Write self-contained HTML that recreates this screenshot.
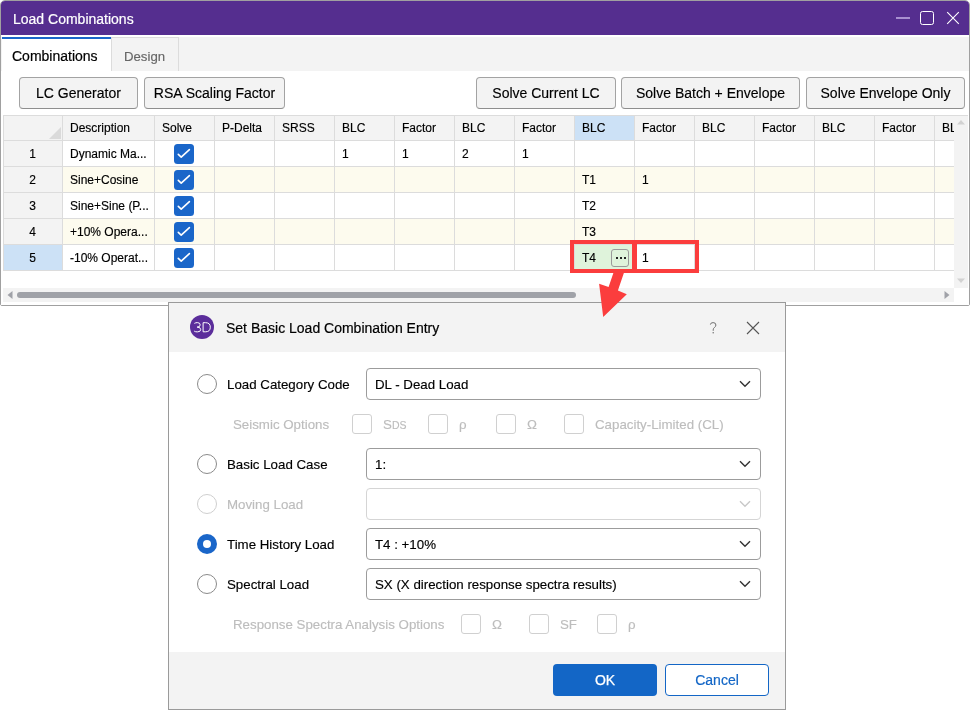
<!DOCTYPE html>
<html><head><meta charset="utf-8"><style>
html,body{margin:0;padding:0;}
body{width:970px;height:710px;position:relative;overflow:hidden;background:#fff;font-family:"Liberation Sans", sans-serif;}
body>div{position:absolute;}
.t{white-space:nowrap;-webkit-font-smoothing:antialiased;-webkit-text-stroke:0.15px currentColor;}
body{will-change:transform;}
</style></head><body>
<div style="left:0px;top:0px;width:970px;height:306px;background:#fff;border:1px solid #a0a0a0;box-sizing:border-box;border-radius:5px 5px 2px 2px;"></div>
<div style="left:1px;top:1px;width:968px;height:34px;background:#552e8f;border-radius:4px 4px 0 0;"></div>
<div class="t" style="left:13px;top:12.15px;font-size:14px;line-height:14px;color:#fff;-webkit-text-stroke:0.2px #fff;">Load Combinations</div>
<div style="left:896px;top:17px;width:14px;height:2px;background:#a88fd0;"></div>
<div style="left:920px;top:11px;width:14px;height:14px;border:1.5px solid #fff;border-radius:2.5px;box-sizing:border-box;"></div>
<svg style="position:absolute;left:946px;top:11px" width="14" height="14" viewBox="0 0 14 14"><path d="M1.2 1.2 L12.8 12.8 M12.8 1.2 L1.2 12.8" stroke="#fff" stroke-width="1.1"/></svg>
<div style="left:1px;top:35px;width:968px;height:2px;background:#fff;"></div>
<div style="left:1px;top:37px;width:968px;height:34px;background:#f3f3f3;"></div>
<div style="left:2px;top:37px;width:109px;height:34px;background:#fff;"></div>
<div style="left:2px;top:37px;width:110px;height:2px;background:#1a66c9;"></div>
<div style="left:111px;top:37px;width:1px;height:34px;background:#dcdcdc;"></div>
<div style="left:112px;top:37px;width:67px;height:34px;background:#f3f3f3;border-top:1px solid #dcdcdc;border-right:1px solid #dcdcdc;box-sizing:border-box;"></div>
<div class="t" style="left:12px;top:49.15px;font-size:14px;line-height:14px;color:#000;-webkit-text-stroke:0.2px #000;">Combinations</div>
<div class="t" style="left:124px;top:49.83px;font-size:13.2px;line-height:13.2px;color:#666;">Design</div>
<div style="left:1px;top:71px;width:968px;height:234px;background:#fff;"></div>
<div style="left:19px;top:77px;width:119px;height:32px;background:#f3f3f3;border:1px solid #a3a3a3;border-bottom-color:#8e8e8e;border-radius:4px;box-sizing:border-box;"></div>
<div class="t" style="left:19.0px;width:119px;text-align:center;top:86.15px;font-size:14px;line-height:14px;color:#000;">LC Generator</div>
<div style="left:144px;top:77px;width:141px;height:32px;background:#f3f3f3;border:1px solid #a3a3a3;border-bottom-color:#8e8e8e;border-radius:4px;box-sizing:border-box;"></div>
<div class="t" style="left:144.0px;width:141px;text-align:center;top:86.15px;font-size:14px;line-height:14px;color:#000;">RSA Scaling Factor</div>
<div style="left:476px;top:77px;width:140px;height:32px;background:#f3f3f3;border:1px solid #a3a3a3;border-bottom-color:#8e8e8e;border-radius:4px;box-sizing:border-box;"></div>
<div class="t" style="left:476.0px;width:140px;text-align:center;top:86.15px;font-size:14px;line-height:14px;color:#000;">Solve Current LC</div>
<div style="left:621px;top:77px;width:179px;height:32px;background:#f3f3f3;border:1px solid #a3a3a3;border-bottom-color:#8e8e8e;border-radius:4px;box-sizing:border-box;"></div>
<div class="t" style="left:621.0px;width:179px;text-align:center;top:86.15px;font-size:14px;line-height:14px;color:#000;">Solve Batch + Envelope</div>
<div style="left:806px;top:77px;width:159px;height:32px;background:#f3f3f3;border:1px solid #a3a3a3;border-bottom-color:#8e8e8e;border-radius:4px;box-sizing:border-box;"></div>
<div class="t" style="left:806.0px;width:159px;text-align:center;top:86.15px;font-size:14px;line-height:14px;color:#000;">Solve Envelope Only</div>
<div style="left:3px;top:115px;width:951px;height:25px;background:#f3f3f3;"></div>
<div style="left:3px;top:140px;width:59px;height:130px;background:#f3f3f3;"></div>
<div style="left:62px;top:166px;width:892px;height:26px;background:#fdfbee;"></div>
<div style="left:62px;top:218px;width:892px;height:26px;background:#fdfbee;"></div>
<div style="left:3px;top:244px;width:59px;height:26px;background:#cce1f6;"></div>
<div style="left:574px;top:115px;width:60px;height:25px;background:#cce1f6;"></div>
<div style="left:574px;top:244px;width:60px;height:26px;background:#dff3db;"></div>
<div style="left:3px;top:140px;width:951px;height:1px;background:#dcdcdc;"></div>
<div style="left:3px;top:166px;width:951px;height:1px;background:#dcdcdc;"></div>
<div style="left:3px;top:192px;width:951px;height:1px;background:#dcdcdc;"></div>
<div style="left:3px;top:218px;width:951px;height:1px;background:#dcdcdc;"></div>
<div style="left:3px;top:244px;width:951px;height:1px;background:#dcdcdc;"></div>
<div style="left:3px;top:270px;width:951px;height:1px;background:#dcdcdc;"></div>
<div style="left:3px;top:115px;width:1px;height:156px;background:#dcdcdc;"></div>
<div style="left:62px;top:115px;width:1px;height:156px;background:#dcdcdc;"></div>
<div style="left:154px;top:115px;width:1px;height:156px;background:#dcdcdc;"></div>
<div style="left:214px;top:115px;width:1px;height:156px;background:#dcdcdc;"></div>
<div style="left:274px;top:115px;width:1px;height:156px;background:#dcdcdc;"></div>
<div style="left:334px;top:115px;width:1px;height:156px;background:#dcdcdc;"></div>
<div style="left:394px;top:115px;width:1px;height:156px;background:#dcdcdc;"></div>
<div style="left:454px;top:115px;width:1px;height:156px;background:#dcdcdc;"></div>
<div style="left:514px;top:115px;width:1px;height:156px;background:#dcdcdc;"></div>
<div style="left:574px;top:115px;width:1px;height:156px;background:#dcdcdc;"></div>
<div style="left:634px;top:115px;width:1px;height:156px;background:#dcdcdc;"></div>
<div style="left:694px;top:115px;width:1px;height:156px;background:#dcdcdc;"></div>
<div style="left:754px;top:115px;width:1px;height:156px;background:#dcdcdc;"></div>
<div style="left:814px;top:115px;width:1px;height:156px;background:#dcdcdc;"></div>
<div style="left:874px;top:115px;width:1px;height:156px;background:#dcdcdc;"></div>
<div style="left:934px;top:115px;width:1px;height:156px;background:#dcdcdc;"></div>
<svg style="position:absolute;left:49px;top:127px" width="13" height="13"><path d="M12 0 L12 12 L0 12 Z" fill="#dadada"/></svg>
<div class="t" style="left:70px;top:121.84px;font-size:12px;line-height:12px;color:#000;">Description</div>
<div class="t" style="left:162px;top:121.84px;font-size:12px;line-height:12px;color:#000;">Solve</div>
<div class="t" style="left:222px;top:121.84px;font-size:12px;line-height:12px;color:#000;">P-Delta</div>
<div class="t" style="left:282px;top:121.84px;font-size:12px;line-height:12px;color:#000;">SRSS</div>
<div class="t" style="left:342px;top:121.84px;font-size:12px;line-height:12px;color:#000;">BLC</div>
<div class="t" style="left:402px;top:121.84px;font-size:12px;line-height:12px;color:#000;">Factor</div>
<div class="t" style="left:462px;top:121.84px;font-size:12px;line-height:12px;color:#000;">BLC</div>
<div class="t" style="left:522px;top:121.84px;font-size:12px;line-height:12px;color:#000;">Factor</div>
<div class="t" style="left:582px;top:121.84px;font-size:12px;line-height:12px;color:#000;">BLC</div>
<div class="t" style="left:642px;top:121.84px;font-size:12px;line-height:12px;color:#000;">Factor</div>
<div class="t" style="left:702px;top:121.84px;font-size:12px;line-height:12px;color:#000;">BLC</div>
<div class="t" style="left:762px;top:121.84px;font-size:12px;line-height:12px;color:#000;">Factor</div>
<div class="t" style="left:822px;top:121.84px;font-size:12px;line-height:12px;color:#000;">BLC</div>
<div class="t" style="left:882px;top:121.84px;font-size:12px;line-height:12px;color:#000;">Factor</div>
<div class="t" style="left:942px;top:121.84px;font-size:12px;line-height:12px;color:#000;">BLC</div>
<div class="t" style="left:12.5px;width:40px;text-align:center;top:147.84px;font-size:12px;line-height:12px;color:#000;">1</div>
<div class="t" style="left:12.5px;width:40px;text-align:center;top:173.84px;font-size:12px;line-height:12px;color:#000;">2</div>
<div class="t" style="left:12.5px;width:40px;text-align:center;top:199.84px;font-size:12px;line-height:12px;color:#000;">3</div>
<div class="t" style="left:12.5px;width:40px;text-align:center;top:225.84px;font-size:12px;line-height:12px;color:#000;">4</div>
<div class="t" style="left:12.5px;width:40px;text-align:center;top:251.84px;font-size:12px;line-height:12px;color:#000;">5</div>
<div class="t" style="left:70px;top:147.84px;font-size:12px;line-height:12px;color:#000;">Dynamic Ma...</div>
<div class="t" style="left:70px;top:173.84px;font-size:12px;line-height:12px;color:#000;">Sine+Cosine</div>
<div class="t" style="left:70px;top:199.84px;font-size:12px;line-height:12px;color:#000;">Sine+Sine (P...</div>
<div class="t" style="left:70px;top:225.84px;font-size:12px;line-height:12px;color:#000;">+10% Opera...</div>
<div class="t" style="left:70px;top:251.84px;font-size:12px;line-height:12px;color:#000;">-10% Operat...</div>
<svg style="position:absolute;left:174px;top:144px" width="20" height="20" viewBox="0 0 20 20"><rect x="0" y="0" width="20" height="20" rx="3.5" fill="#1a66c9"/><path d="M4.3 10.4 L7.2 13.2 L15.4 5.6" stroke="#fff" stroke-width="1.6" fill="none" stroke-linecap="round" stroke-linejoin="round"/></svg>
<svg style="position:absolute;left:174px;top:170px" width="20" height="20" viewBox="0 0 20 20"><rect x="0" y="0" width="20" height="20" rx="3.5" fill="#1a66c9"/><path d="M4.3 10.4 L7.2 13.2 L15.4 5.6" stroke="#fff" stroke-width="1.6" fill="none" stroke-linecap="round" stroke-linejoin="round"/></svg>
<svg style="position:absolute;left:174px;top:196px" width="20" height="20" viewBox="0 0 20 20"><rect x="0" y="0" width="20" height="20" rx="3.5" fill="#1a66c9"/><path d="M4.3 10.4 L7.2 13.2 L15.4 5.6" stroke="#fff" stroke-width="1.6" fill="none" stroke-linecap="round" stroke-linejoin="round"/></svg>
<svg style="position:absolute;left:174px;top:222px" width="20" height="20" viewBox="0 0 20 20"><rect x="0" y="0" width="20" height="20" rx="3.5" fill="#1a66c9"/><path d="M4.3 10.4 L7.2 13.2 L15.4 5.6" stroke="#fff" stroke-width="1.6" fill="none" stroke-linecap="round" stroke-linejoin="round"/></svg>
<svg style="position:absolute;left:174px;top:248px" width="20" height="20" viewBox="0 0 20 20"><rect x="0" y="0" width="20" height="20" rx="3.5" fill="#1a66c9"/><path d="M4.3 10.4 L7.2 13.2 L15.4 5.6" stroke="#fff" stroke-width="1.6" fill="none" stroke-linecap="round" stroke-linejoin="round"/></svg>
<div class="t" style="left:342px;top:147.84px;font-size:12px;line-height:12px;color:#000;">1</div>
<div class="t" style="left:402px;top:147.84px;font-size:12px;line-height:12px;color:#000;">1</div>
<div class="t" style="left:462px;top:147.84px;font-size:12px;line-height:12px;color:#000;">2</div>
<div class="t" style="left:522px;top:147.84px;font-size:12px;line-height:12px;color:#000;">1</div>
<div class="t" style="left:582px;top:173.84px;font-size:12px;line-height:12px;color:#000;">T1</div>
<div class="t" style="left:642px;top:173.84px;font-size:12px;line-height:12px;color:#000;">1</div>
<div class="t" style="left:582px;top:199.84px;font-size:12px;line-height:12px;color:#000;">T2</div>
<div class="t" style="left:582px;top:225.84px;font-size:12px;line-height:12px;color:#000;">T3</div>
<div class="t" style="left:582px;top:251.84px;font-size:12px;line-height:12px;color:#000;">T4</div>
<div class="t" style="left:642px;top:251.84px;font-size:12px;line-height:12px;color:#000;">1</div>
<div style="left:611px;top:249px;width:18px;height:18px;border:1px solid #9a9a9a;border-radius:3px;box-sizing:border-box;"></div>
<div style="left:615.5px;top:257px;width:2px;height:2px;background:#222;"></div>
<div style="left:619.5px;top:257px;width:2px;height:2px;background:#222;"></div>
<div style="left:623.5px;top:257px;width:2px;height:2px;background:#222;"></div>
<div style="left:954px;top:115px;width:14px;height:173px;background:#f3f3f3;"></div>
<div style="left:3px;top:115px;width:965px;height:1px;background:#dcdcdc;"></div>
<svg style="position:absolute;left:957px;top:119px" width="8" height="6"><path d="M0 5.5 L4 1 L8 5.5 Z" fill="#d2d2d2"/></svg>
<svg style="position:absolute;left:957px;top:278px" width="8" height="6"><path d="M0 0.5 L4 5 L8 0.5 Z" fill="#d2d2d2"/></svg>
<div style="left:3px;top:288px;width:951px;height:14px;background:#f3f3f3;"></div>
<svg style="position:absolute;left:7px;top:291px" width="6" height="8"><path d="M5.5 0 L0.5 4 L5.5 8 Z" fill="#a0a2a8"/></svg>
<svg style="position:absolute;left:944px;top:291px" width="6" height="8"><path d="M0.5 0 L5.5 4 L0.5 8 Z" fill="#a0a2a8"/></svg>
<div style="left:17px;top:292px;width:559px;height:6px;background:#a0a2a8;border-radius:3px;"></div>
<div style="left:570px;top:240px;width:66px;height:33px;border:4px solid #fb3d3d;box-sizing:border-box;"></div>
<div style="left:633px;top:240px;width:66px;height:33px;border:4px solid #fb3d3d;box-sizing:border-box;"></div>
<div style="left:168px;top:302px;width:618px;height:408px;background:#fff;border:1px solid #9a9a9a;box-sizing:border-box;"></div>
<div style="left:169px;top:303px;width:616px;height:49px;background:#f3f3f3;"></div>
<div style="left:169px;top:652px;width:616px;height:57px;background:#f3f3f3;"></div>
<svg style="position:absolute;left:0;top:0" width="970" height="710"><path d="M614.4 270 L624.9 270 L617.9 290.6 L626.8 294.3 L603.2 316.9 L599.1 283.8 L608.6 287.1 Z" fill="#fb3d3d"/></svg>
<svg style="position:absolute;left:190px;top:315px" width="24" height="24" viewBox="0 0 24 24"><circle cx="12" cy="12" r="12" fill="#5b2d9b"/><path d="M4.4 8.4 Q5.6 7.6 7.3 7.6 Q10.2 7.6 10.2 9.9 Q10.2 12.1 7.1 12.1 Q10.7 12.1 10.7 14.6 Q10.7 16.9 7.3 16.9 Q5.4 16.9 4.2 16.1 M13.1 7.7 L13.1 16.8 L15.6 16.8 Q20.3 16.8 20.3 12.2 Q20.3 7.7 15.6 7.7 Z" stroke="#fff" stroke-width="1" fill="none"/></svg>
<div class="t" style="left:226px;top:321.15px;font-size:14px;line-height:14px;color:#000;-webkit-text-stroke:0.2px #000;">Set Basic Load Combination Entry</div>
<svg style="position:absolute;left:708px;top:320px" width="12" height="16"><path d="M2.4 4.6 Q2.5 2.6 5.1 2.6 Q7.9 2.6 7.9 5.0 Q7.9 6.6 6.3 7.6 Q5.2 8.4 5.2 9.9 L5.2 10.8" stroke="#707070" stroke-width="1" fill="none"/><circle cx="5.2" cy="12.7" r="0.75" fill="#707070"/></svg>
<svg style="position:absolute;left:746px;top:321px" width="14" height="14" viewBox="0 0 14 14"><path d="M1 1 L13 13 M13 1 L1 13" stroke="#555" stroke-width="1.1"/></svg>
<svg style="position:absolute;left:197px;top:374px" width="20" height="20"><circle cx="10" cy="10" r="9.5" fill="#fff" stroke="#8a8a8a" stroke-width="1"/></svg>
<div class="t" style="left:227px;top:377.74px;font-size:13.3px;line-height:13.3px;color:#000;">Load Category Code</div>
<div style="left:366px;top:368px;width:395px;height:32px;border:1px solid #9c9c9c;border-radius:4px;box-sizing:border-box;background:#fff;"></div>
<div class="t" style="left:375px;top:377.74px;font-size:13.3px;line-height:13.3px;color:#000;">DL - Dead Load</div>
<svg style="position:absolute;left:739px;top:380px" width="12" height="8"><path d="M1 1.2 L6 6.2 L11 1.2" stroke="#333" stroke-width="1.4" fill="none"/></svg>
<svg style="position:absolute;left:197px;top:454px" width="20" height="20"><circle cx="10" cy="10" r="9.5" fill="#fff" stroke="#8a8a8a" stroke-width="1"/></svg>
<div class="t" style="left:227px;top:457.74px;font-size:13.3px;line-height:13.3px;color:#000;">Basic Load Case</div>
<div style="left:366px;top:448px;width:395px;height:32px;border:1px solid #9c9c9c;border-radius:4px;box-sizing:border-box;background:#fff;"></div>
<div class="t" style="left:375px;top:457.74px;font-size:13.3px;line-height:13.3px;color:#000;">1:</div>
<svg style="position:absolute;left:739px;top:460px" width="12" height="8"><path d="M1 1.2 L6 6.2 L11 1.2" stroke="#333" stroke-width="1.4" fill="none"/></svg>
<svg style="position:absolute;left:197px;top:494px" width="20" height="20"><circle cx="10" cy="10" r="9.5" fill="#fff" stroke="#cfcfcf" stroke-width="1"/></svg>
<div class="t" style="left:227px;top:497.74px;font-size:13.3px;line-height:13.3px;color:#bdbdbd;">Moving Load</div>
<div style="left:366px;top:488px;width:395px;height:32px;border:1px solid #d5d5d5;border-radius:4px;box-sizing:border-box;background:#fff;"></div>
<svg style="position:absolute;left:739px;top:500px" width="12" height="8"><path d="M1 1.2 L6 6.2 L11 1.2" stroke="#c8c8c8" stroke-width="1.4" fill="none"/></svg>
<svg style="position:absolute;left:197px;top:534px" width="20" height="20"><circle cx="10" cy="10" r="10" fill="#1a66c9"/><circle cx="10" cy="10" r="4" fill="#fff"/></svg>
<div class="t" style="left:227px;top:537.74px;font-size:13.3px;line-height:13.3px;color:#000;">Time History Load</div>
<div style="left:366px;top:528px;width:395px;height:32px;border:1px solid #9c9c9c;border-radius:4px;box-sizing:border-box;background:#fff;"></div>
<div class="t" style="left:375px;top:537.74px;font-size:13.3px;line-height:13.3px;color:#000;">T4 : +10%</div>
<svg style="position:absolute;left:739px;top:540px" width="12" height="8"><path d="M1 1.2 L6 6.2 L11 1.2" stroke="#333" stroke-width="1.4" fill="none"/></svg>
<svg style="position:absolute;left:197px;top:574px" width="20" height="20"><circle cx="10" cy="10" r="9.5" fill="#fff" stroke="#8a8a8a" stroke-width="1"/></svg>
<div class="t" style="left:227px;top:577.74px;font-size:13.3px;line-height:13.3px;color:#000;">Spectral Load</div>
<div style="left:366px;top:568px;width:395px;height:32px;border:1px solid #9c9c9c;border-radius:4px;box-sizing:border-box;background:#fff;"></div>
<div class="t" style="left:375px;top:577.74px;font-size:13.3px;line-height:13.3px;color:#000;">SX (X direction response spectra results)</div>
<svg style="position:absolute;left:739px;top:580px" width="12" height="8"><path d="M1 1.2 L6 6.2 L11 1.2" stroke="#333" stroke-width="1.4" fill="none"/></svg>
<div class="t" style="left:233px;top:417.74px;font-size:13.3px;line-height:13.3px;color:#bdbdbd;">Seismic Options</div>
<div style="left:352px;top:414px;width:20px;height:20px;border:1px solid #d0d0d0;border-radius:3px;box-sizing:border-box;"></div>
<div class="t" style="left:383px;top:417.74px;font-size:13.3px;line-height:13.3px;color:#bdbdbd;">S<span style="font-size:10.5px">DS</span></div>
<div style="left:428px;top:414px;width:20px;height:20px;border:1px solid #d0d0d0;border-radius:3px;box-sizing:border-box;"></div>
<div class="t" style="left:459px;top:417.74px;font-size:13.3px;line-height:13.3px;color:#bdbdbd;">ρ</div>
<div style="left:496px;top:414px;width:20px;height:20px;border:1px solid #d0d0d0;border-radius:3px;box-sizing:border-box;"></div>
<div class="t" style="left:527px;top:417.74px;font-size:13.3px;line-height:13.3px;color:#bdbdbd;">Ω</div>
<div style="left:564px;top:414px;width:20px;height:20px;border:1px solid #d0d0d0;border-radius:3px;box-sizing:border-box;"></div>
<div class="t" style="left:595px;top:417.74px;font-size:13.3px;line-height:13.3px;color:#bdbdbd;">Capacity-Limited (CL)</div>
<div class="t" style="left:233px;top:617.74px;font-size:13.3px;line-height:13.3px;color:#bdbdbd;">Response Spectra Analysis Options</div>
<div style="left:461px;top:614px;width:20px;height:20px;border:1px solid #d0d0d0;border-radius:3px;box-sizing:border-box;"></div>
<div class="t" style="left:492px;top:617.74px;font-size:13.3px;line-height:13.3px;color:#bdbdbd;">Ω</div>
<div style="left:529px;top:614px;width:20px;height:20px;border:1px solid #d0d0d0;border-radius:3px;box-sizing:border-box;"></div>
<div class="t" style="left:560px;top:617.74px;font-size:13.3px;line-height:13.3px;color:#bdbdbd;">SF</div>
<div style="left:597px;top:614px;width:20px;height:20px;border:1px solid #d0d0d0;border-radius:3px;box-sizing:border-box;"></div>
<div class="t" style="left:628px;top:617.74px;font-size:13.3px;line-height:13.3px;color:#bdbdbd;">ρ</div>
<div style="left:553px;top:664px;width:104px;height:32px;background:#1366c6;border-radius:4px;"></div>
<div class="t" style="left:553.0px;width:104px;text-align:center;top:673.15px;font-size:14px;line-height:14px;color:#fff;-webkit-text-stroke:0.25px #fff;">OK</div>
<div style="left:665px;top:664px;width:104px;height:32px;background:#fff;border:1px solid #1366c6;border-radius:4px;box-sizing:border-box;"></div>
<div class="t" style="left:665.0px;width:104px;text-align:center;top:673.15px;font-size:14px;line-height:14px;color:#1366c6;-webkit-text-stroke:0.2px #1366c6;">Cancel</div>
</body></html>
